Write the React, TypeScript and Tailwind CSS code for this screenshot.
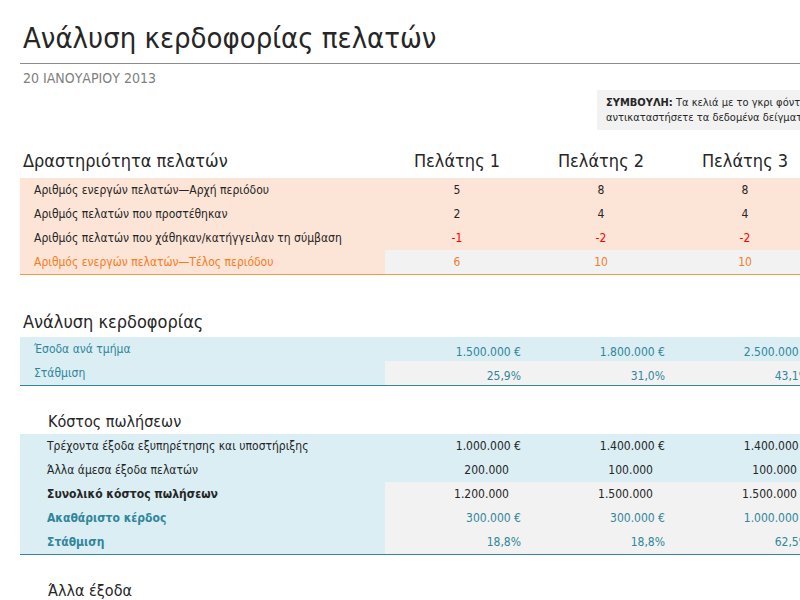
import React from "react";

const F = { fontFamily: '"DejaVu Sans Condensed","DejaVu Sans",sans-serif' };

function Row({ label, vals, labelCls = "", valCls = "", bg, valBg, pl = "pl-[14px]", align = "center" }: any) {
  return (
    <div className={`flex h-6 items-center text-[12px] ${bg}`}>
      <div className={`w-[365px] shrink-0 ${pl} ${labelCls}`}>{label}</div>
      <div className={`flex flex-1 h-full ${valBg || ""}`}>
        {vals.map((v: string, i: number) => (
          <div key={i} className={`w-[144px] shrink-0 flex items-center h-full ${align === "center" ? "justify-center" : "justify-end pr-[8px]"} ${valCls} ${typeof v === "string" && v.startsWith("-") ? "text-[#ff0000]" : ""}`}>
            {align !== "center" && !v.includes("€") && !v.includes("%") ? <span className="pr-[12px]">{v}</span> : v}
          </div>
        ))}
      </div>
    </div>
  );
}

export default function App() {
  return (
    <div className="w-[800px] h-[600px] overflow-hidden bg-white text-[#262626]" style={F}>
      <div className="pl-[20px] w-[830px]">
        <div className="pt-[20px] pl-[3px] text-[29px] leading-[36px] text-[#262626]">Ανάλυση κερδοφορίας πελατών</div>
        <div className="mt-[7px] border-t border-[#8c8c8c]" />
        <div className="mt-[4px] pl-[3px] text-[14px] text-[#808080]">20 ΙΑΝΟΥΑΡΙΟΥ 2013</div>
        <div className="flex">
          <div className="ml-[577px] mt-[1px] w-[230px] h-[40px] bg-[#f2f2f2] pl-[9px] pt-[5px] text-[11px] leading-[15px] whitespace-nowrap overflow-hidden">
            <div><b>ΣΥΜΒΟΥΛΗ:</b> Τα κελιά με το γκρι φόντο σάς επιτρέπουν να</div>
            <div>αντικαταστήσετε τα δεδομένα δείγματος</div>
          </div>
        </div>
        <div className="mt-[16px] flex h-[28px] items-center text-[18px]">
          <div className="w-[365px] shrink-0 pl-[3px]">Δραστηριότητα πελατών</div>
          <div className="w-[144px] shrink-0 text-center">Πελάτης 1</div>
          <div className="w-[144px] shrink-0 text-center">Πελάτης 2</div>
          <div className="w-[144px] shrink-0 text-center">Πελάτης 3</div>
        </div>
        <div className="mt-[4px] border-b border-[#f79646]">
          <Row bg="bg-[#fce4d6]" label="Αριθμός ενεργών πελατών—Αρχή περιόδου" vals={["5", "8", "8"]} />
          <Row bg="bg-[#fce4d6]" label="Αριθμός πελατών που προστέθηκαν" vals={["2", "4", "4"]} />
          <Row bg="bg-[#fce4d6]" label="Αριθμός πελατών που χάθηκαν/κατήγγειλαν τη σύμβαση" vals={["-1", "-2", "-2"]} />
          <Row bg="bg-[#fce4d6]" valBg="bg-[#f2f2f2]" labelCls="text-[#f57d1f]" valCls="text-[#f57d1f]" label="Αριθμός ενεργών πελατών—Τέλος περιόδου" vals={["6", "10", "10"]} />
        </div>
        <div className="mt-[32px] pl-[3px] text-[18px] h-[30px] leading-[30px]">Ανάλυση κερδοφορίας</div>
        <div className="border-b border-[#31869b] text-[#31869b]">
          <div className="flex h-6 text-[12px] bg-[#daeef3]">
            <div className="w-[365px] shrink-0 pl-[14px] pt-[3px]">Έσοδα ανά τμήμα</div>
            {["1.500.000 €", "1.800.000 €", "2.500.000 €"].map((v) => (
              <div key={v} className="w-[144px] shrink-0 flex items-end justify-end pr-[8px]">{v}</div>
            ))}
          </div>
          <div className="flex h-6 text-[12px] bg-[#daeef3]">
            <div className="w-[365px] shrink-0 pl-[14px] pt-[3px]">Στάθμιση</div>
            <div className="flex flex-1 bg-[#f2f2f2]">
              {["25,9%", "31,0%", "43,1%"].map((v) => (
                <div key={v} className="w-[144px] shrink-0 flex items-end justify-end pr-[8px]">{v}</div>
              ))}
            </div>
          </div>
        </div>
        <div className="mt-[24px] pl-[28px] text-[16px] h-[24px] leading-[24px]">Κόστος πωλήσεων</div>
        <div className="border-b border-[#31869b]">
          <Row bg="bg-[#daeef3]" pl="pl-[27px]" align="right" label="Τρέχοντα έξοδα εξυπηρέτησης και υποστήριξης" vals={["1.000.000 €", "1.400.000 €", "1.400.000 €"]} />
          <Row bg="bg-[#daeef3]" pl="pl-[27px]" align="right" label="Άλλα άμεσα έξοδα πελατών" vals={["200.000", "100.000", "100.000"]} />
          <Row bg="bg-[#daeef3]" valBg="bg-[#f2f2f2]" pl="pl-[27px]" align="right" labelCls="font-bold" label="Συνολικό κόστος πωλήσεων" vals={["1.200.000", "1.500.000", "1.500.000"]} />
          <Row bg="bg-[#daeef3]" valBg="bg-[#f2f2f2]" pl="pl-[27px]" align="right" labelCls="font-bold text-[#31869b]" valCls="text-[#31869b]" label="Ακαθάριστο κέρδος" vals={["300.000 €", "300.000 €", "1.000.000 €"]} />
          <Row bg="bg-[#daeef3]" valBg="bg-[#f2f2f2]" pl="pl-[27px]" align="right" labelCls="font-bold text-[#31869b]" valCls="text-[#31869b]" label="Στάθμιση" vals={["18,8%", "18,8%", "62,5%"]} />
        </div>
        <div className="mt-[24px] pl-[28px] text-[16px]">Άλλα έξοδα</div>
      </div>
    </div>
  );
}
